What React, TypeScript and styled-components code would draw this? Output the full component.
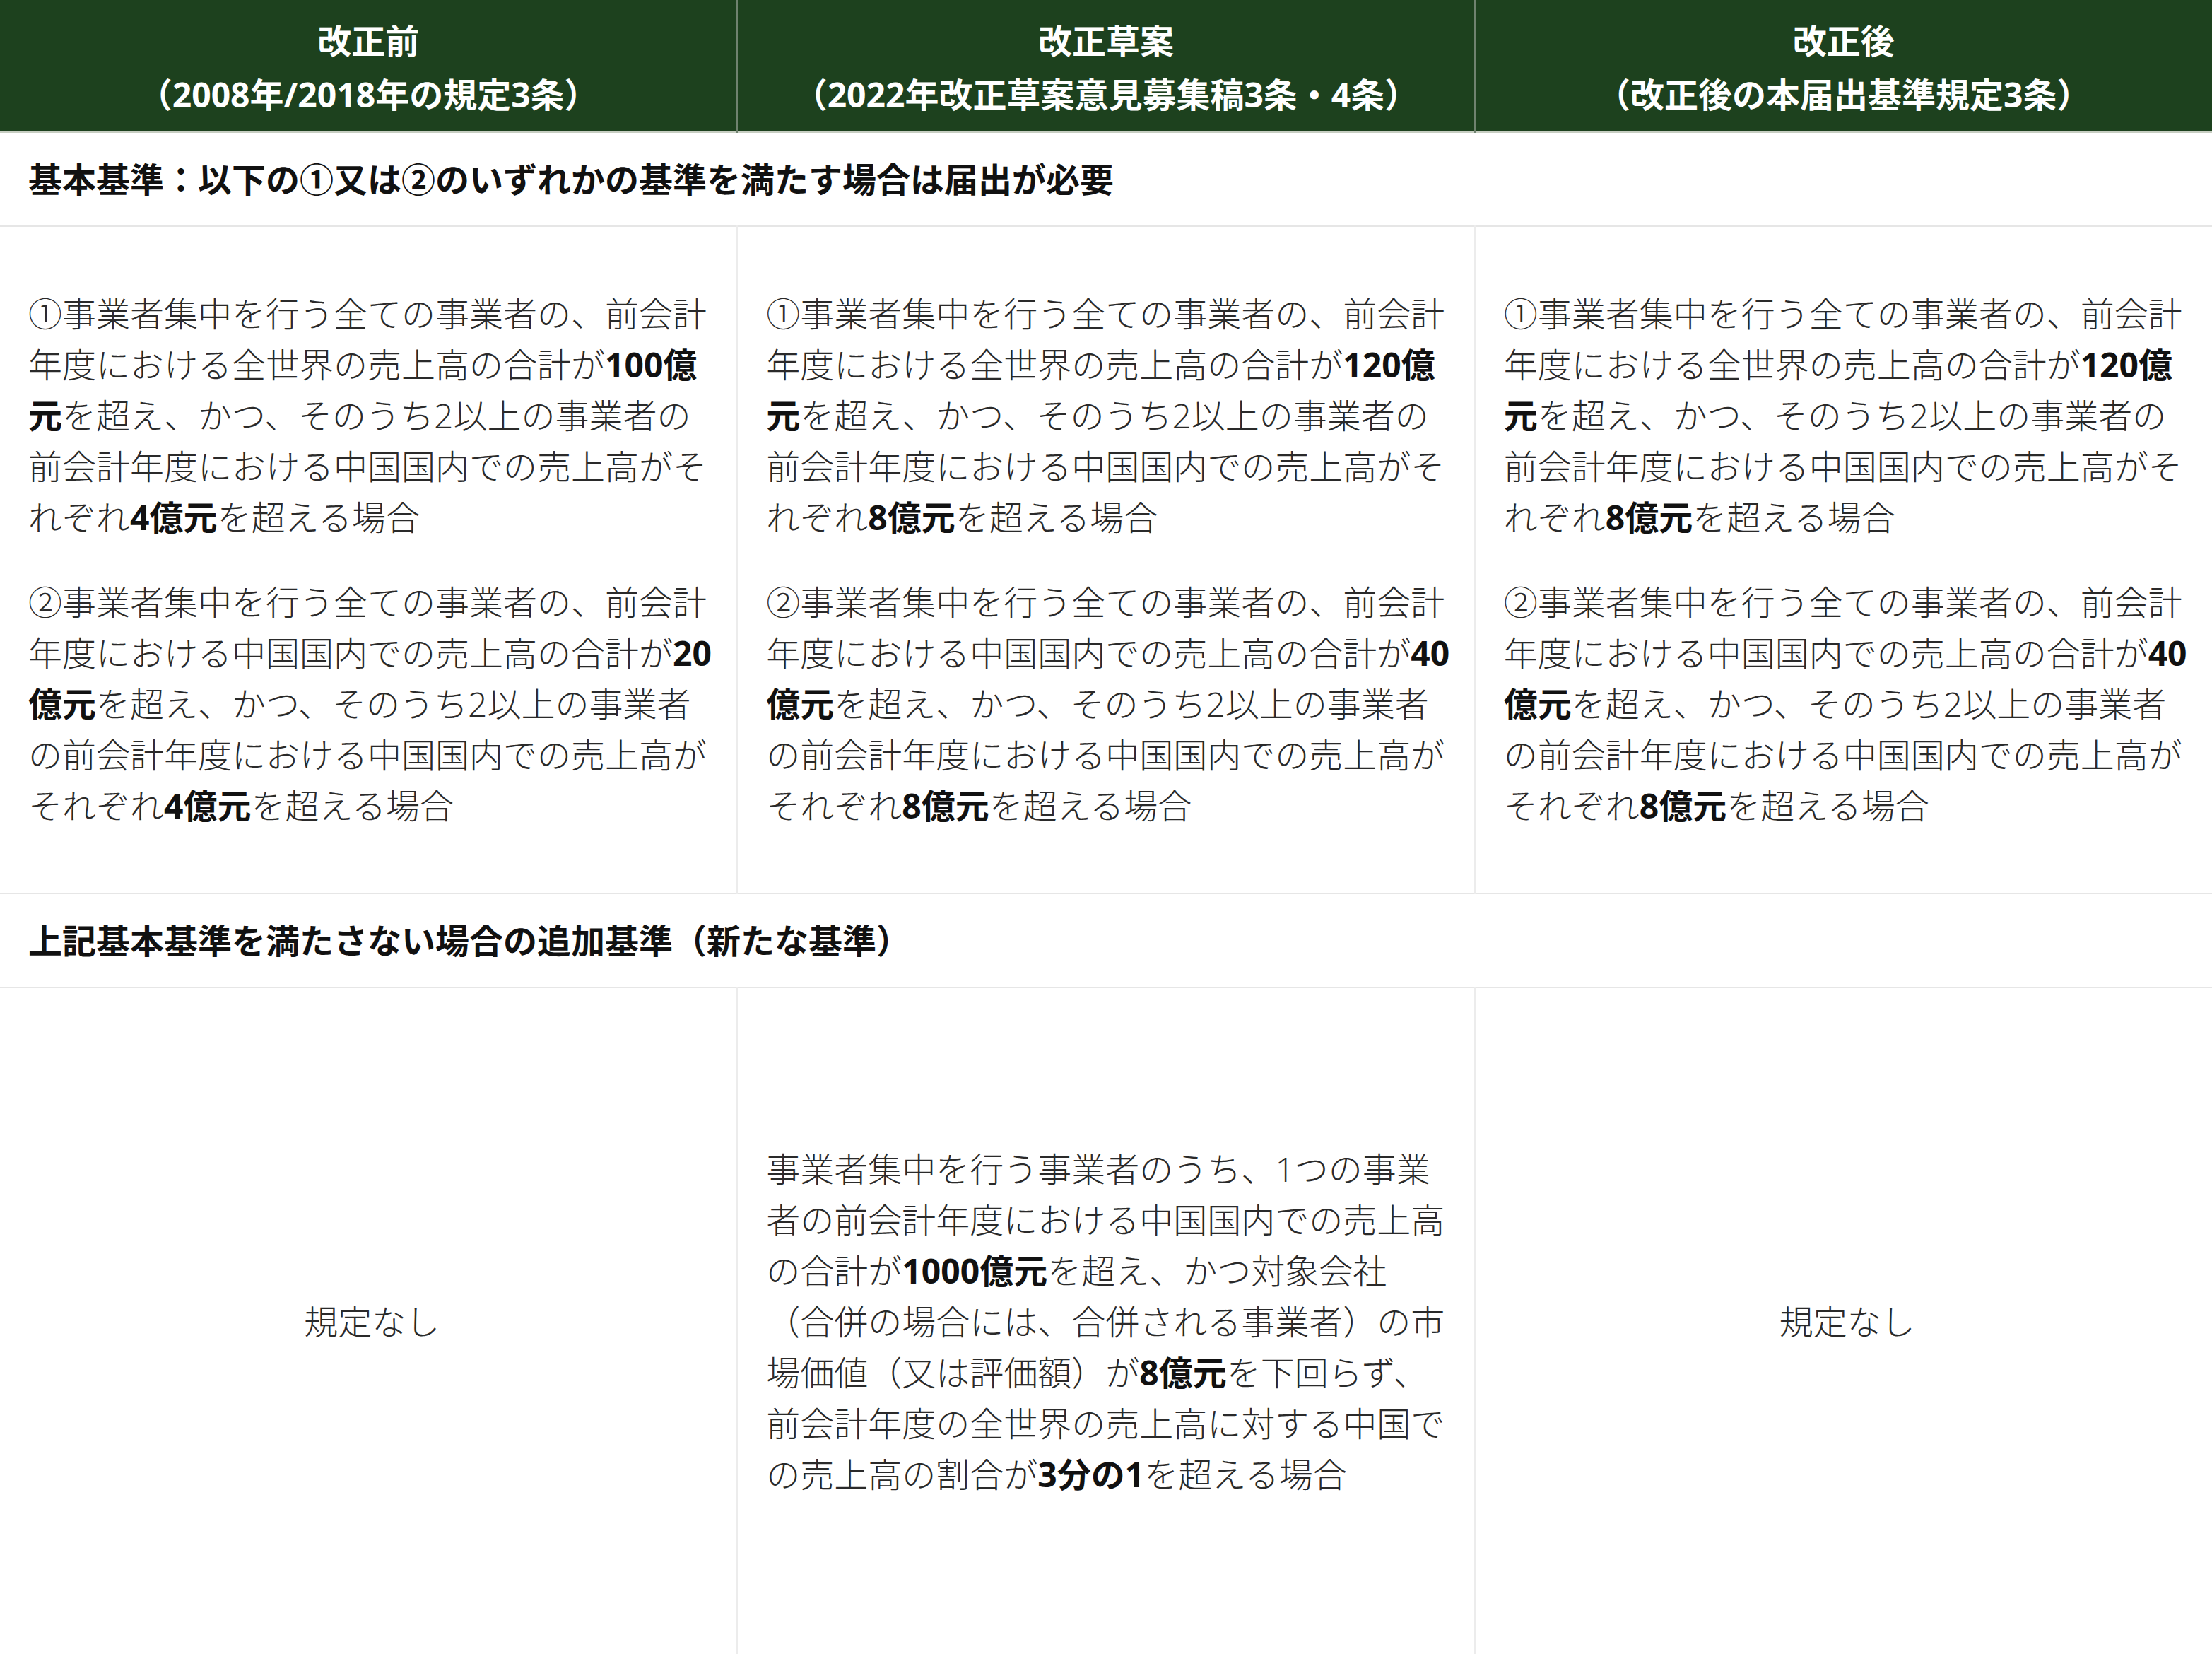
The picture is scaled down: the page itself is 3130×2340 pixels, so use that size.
import React from 'react'
import styled, { createGlobalStyle } from 'styled-components'

const GlobalStyle = createGlobalStyle`
    html, body {
        margin: 0;
        padding: 0;
        background: #ffffff;
        overflow: hidden;
    }
`

const Table = styled.table`
    width: 100%;
    border-collapse: collapse;
    table-layout: fixed;
    font-family: "Open Sans", "Noto Sans CJK JP", sans-serif;
    color: #2a2a2a;
`

const HeadRow = styled.tr`
    border-bottom: 2px solid #c7cec2;
`

const HeadCell = styled.th`
    background-color: #1d411e;
    color: #ffffff;
    font-weight: 700;
    font-size: 48px;
    line-height: 76px;
    padding: 20px 20px 14px;
    text-align: center;
    border-left: 2px solid #6f826f;

    &:first-child {
        border-left: none;
    }
`

const Row = styled.tr<{ $height?: number }>`
    border-bottom: 2px solid #e6e6e6;
    ${({ $height }) => ($height ? `height: ${$height}px;` : '')}
`

const SectionCell = styled.td`
    font-weight: 700;
    font-size: 48px;
    line-height: 72px;
    padding: 30px 40px 29px;
    text-align: left;
    color: #111111;
`

const BodyCell = styled.td<{ $center?: boolean }>`
    vertical-align: middle;
    padding: 39px 30px 39px 40px;
    font-size: 48px;
    line-height: 72px;
    font-weight: 300;
    text-align: ${({ $center }) => ($center ? 'center' : 'left')};
    border-left: 2px solid #ececec;
    word-break: break-all;

    &:first-child {
        border-left: none;
    }
`

const Para = styled.p`
    margin: 48px 0;
`

const Em = styled.b`
    font-weight: 700;
    color: #111111;
`

interface Amounts {
    world: string
    each1: string
    china: string
    each2: string
}

const BasicCriteria: React.FC<{ a: Amounts }> = ({ a }) => (
    <BodyCell>
        <Para>
            ①事業者集中を行う全ての事業者の、前会計年度における全世界の売上高の合計が
            <Em>{a.world}億元</Em>を超え、かつ、そのうち2以上の事業者の前会計年度における中国国内での売上高がそれぞれ
            <Em>{a.each1}億元</Em>を超える場合
        </Para>
        <Para>
            ②事業者集中を行う全ての事業者の、前会計年度における中国国内での売上高の合計が
            <Em>{a.china}億元</Em>を超え、かつ、そのうち2以上の事業者の前会計年度における中国国内での売上高がそれぞれ
            <Em>{a.each2}億元</Em>を超える場合
        </Para>
    </BodyCell>
)

const columns = [
    { title: '改正前', sub: '（2008年/2018年の規定3条）' },
    { title: '改正草案', sub: '（2022年改正草案意見募集稿3条・4条）' },
    { title: '改正後', sub: '（改正後の本届出基準規定3条）' },
]

export default function App() {
    return (
        <>
            <GlobalStyle />
            <Table>
                <thead>
                    <HeadRow>
                        {columns.map((c) => (
                            <HeadCell key={c.title}>
                                {c.title}
                                <br />
                                {c.sub}
                            </HeadCell>
                        ))}
                    </HeadRow>
                </thead>
                <tbody>
                    <Row>
                        <SectionCell colSpan={3}>
                            基本基準：以下の①又は②のいずれかの基準を満たす場合は届出が必要
                        </SectionCell>
                    </Row>
                    <Row>
                        <BasicCriteria a={{ world: '100', each1: '4', china: '20', each2: '4' }} />
                        <BasicCriteria a={{ world: '120', each1: '8', china: '40', each2: '8' }} />
                        <BasicCriteria a={{ world: '120', each1: '8', china: '40', each2: '8' }} />
                    </Row>
                    <Row>
                        <SectionCell colSpan={3}>
                            上記基本基準を満たさない場合の追加基準（新たな基準）
                        </SectionCell>
                    </Row>
                    <Row $height={946}>
                        <BodyCell $center>
                            <Para>規定なし</Para>
                        </BodyCell>
                        <BodyCell>
                            <Para>
                                事業者集中を行う事業者のうち、1つの事業者の前会計年度における中国国内での売上高の合計が
                                <Em>1000億元</Em>を超え、かつ対象会社（合併の場合には、合併される事業者）の市場価値（又は評価額）が
                                <Em>8億元</Em>を下回らず、前会計年度の全世界の売上高に対する中国での売上高の割合が
                                <Em>3分の1</Em>を超える場合
                            </Para>
                        </BodyCell>
                        <BodyCell $center>
                            <Para>規定なし</Para>
                        </BodyCell>
                    </Row>
                </tbody>
            </Table>
        </>
    )
}
